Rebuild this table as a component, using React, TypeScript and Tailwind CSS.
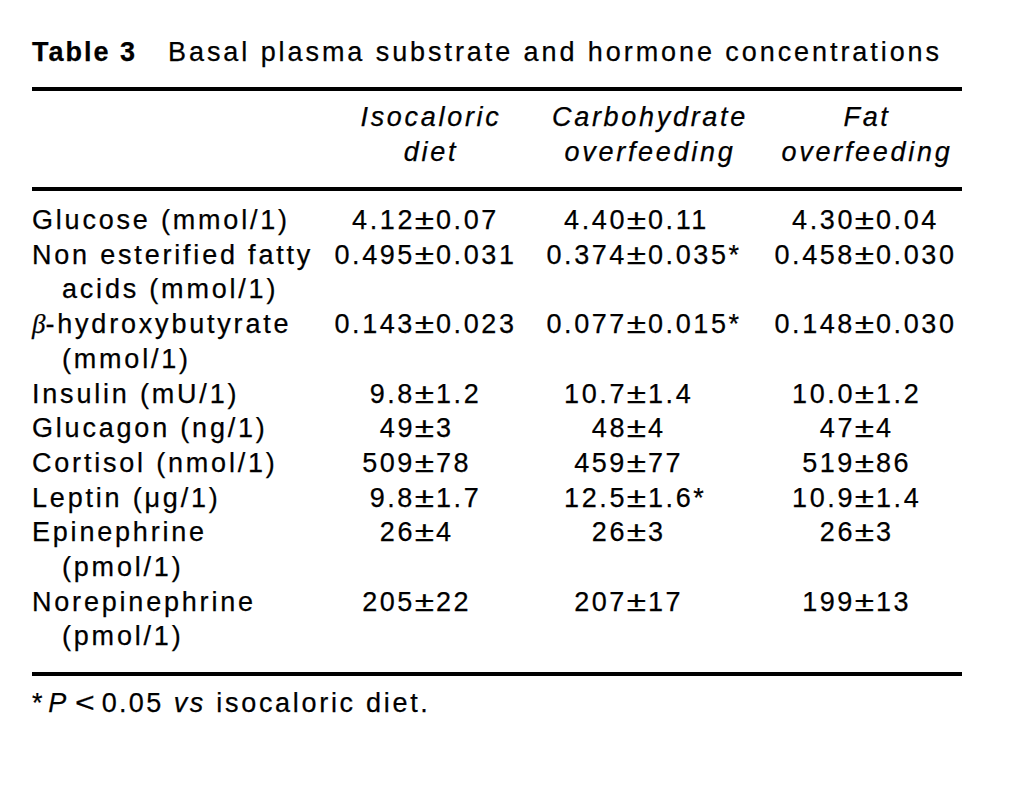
const sans = { fontFamily: '"Liberation Sans", Arial, sans-serif' };

type Row = {
  label: React.ReactNode;
  cont?: string;
  values: [string, string][];
};

const rows: Row[] = [
  { label: "Glucose (mmol/1)", values: [["4.12", "0.07"], ["4.40", "0.11"], ["4.30", "0.04"]] },
  {
    label: "Non esterified fatty",
    cont: "acids (mmol/1)",
    values: [["0.495", "0.031"], ["0.374", "0.035*"], ["0.458", "0.030"]],
  },
  {
    label: (
      <>
        <span className="italic tracking-normal" style={{ fontFamily: '"Liberation Serif", serif' }}>
          β
        </span>
        -hydroxybutyrate
      </>
    ),
    cont: "(mmol/1)",
    values: [["0.143", "0.023"], ["0.077", "0.015*"], ["0.148", "0.030"]],
  },
  { label: "Insulin (mU/1)", values: [["9.8", "1.2"], ["10.7", "1.4"], ["10.0", "1.2"]] },
  { label: "Glucagon (ng/1)", values: [["49", "3"], ["48", "4"], ["47", "4"]] },
  { label: "Cortisol (nmol/1)", values: [["509", "78"], ["459", "77"], ["519", "86"]] },
  { label: "Leptin (μg/1)", values: [["9.8", "1.7"], ["12.5", "1.6*"], ["10.9", "1.4"]] },
  { label: "Epinephrine", cont: "(pmol/1)", values: [["26", "4"], ["26", "3"], ["26", "3"]] },
  { label: "Norepinephrine", cont: "(pmol/1)", values: [["205", "22"], ["207", "17"], ["199", "13"]] },
];

// value cells line up on the ± sign
const cellPad = ["pr-[13px]", "pr-[9px]", "pl-[17px]"];

function Value({ v, i }: { v: [string, string]; i: number }) {
  return (
    <div className={`grid grid-cols-[1fr_auto_1fr] tracking-[2.6px] ${cellPad[i]}`}>
      <span className="text-right">{v[0]}</span>
      <span className="ml-[1px] mr-[3px] w-[17px] text-center tracking-normal">
        <span className="inline-block scale-x-[1.3]">±</span>
      </span>
      <span className="text-left">{v[1]}</span>
    </div>
  );
}

export default function App() {
  return (
    <div
      className="min-h-screen w-[1016px] bg-white text-black [-webkit-text-stroke:0.25px_black]"
      style={sans}
    >
      <div className="w-[930px] ml-[32px] pt-[35px] text-[27px] leading-[35px]">
        {/* caption */}
        <div className="flex">
          <span className="font-bold tracking-[2px]">Table 3</span>
          <span className="ml-[31px] tracking-[2.93px]">Basal plasma substrate and hormone concentrations</span>
        </div>

        <div className="mt-[17px] h-[4px] bg-black" />

        {/* column heads */}
        <div className="grid grid-cols-[300px_200px_220px_210px] pt-[9px] pb-[17px] italic tracking-[2.7px] text-center">
          <div />
          <div className="pr-[2px]">
            Isocaloric
            <br />
            diet
          </div>
          <div className="pl-[16px]">
            Carbohydrate
            <br />
            overfeeding
          </div>
          <div className="pl-[20px]">
            Fat
            <br />
            overfeeding
          </div>
        </div>

        <div className="h-[4px] bg-black" />

        {/* body */}
        <div className="pt-[12px] pb-[18px] leading-[34.7px]">
          {rows.map((r, idx) => (
            <div key={idx} className="grid grid-cols-[300px_200px_220px_210px]">
              <div className="tracking-[2.8px] whitespace-nowrap">
                <div>{r.label}</div>
                {r.cont && <div className="pl-[30px]">{r.cont}</div>}
              </div>
              {r.values.map((v, i) => (
                <div key={i}>
                  <Value v={v} i={i} />
                </div>
              ))}
            </div>
          ))}
        </div>

        <div className="h-[4px] bg-black" />

        {/* footnote */}
        <div className="pt-[10px] tracking-[2.7px]">
          <span className="mr-[3px]">*</span>
          <span className="italic">P</span>
          <span className="ml-[8px] mr-[9px] inline-block scale-x-[1.25] tracking-normal">&lt;</span>
          <span className="tracking-[2.3px]">0.05</span> <span className="italic">vs</span> isocaloric diet.
        </div>
      </div>
    </div>
  );
}
